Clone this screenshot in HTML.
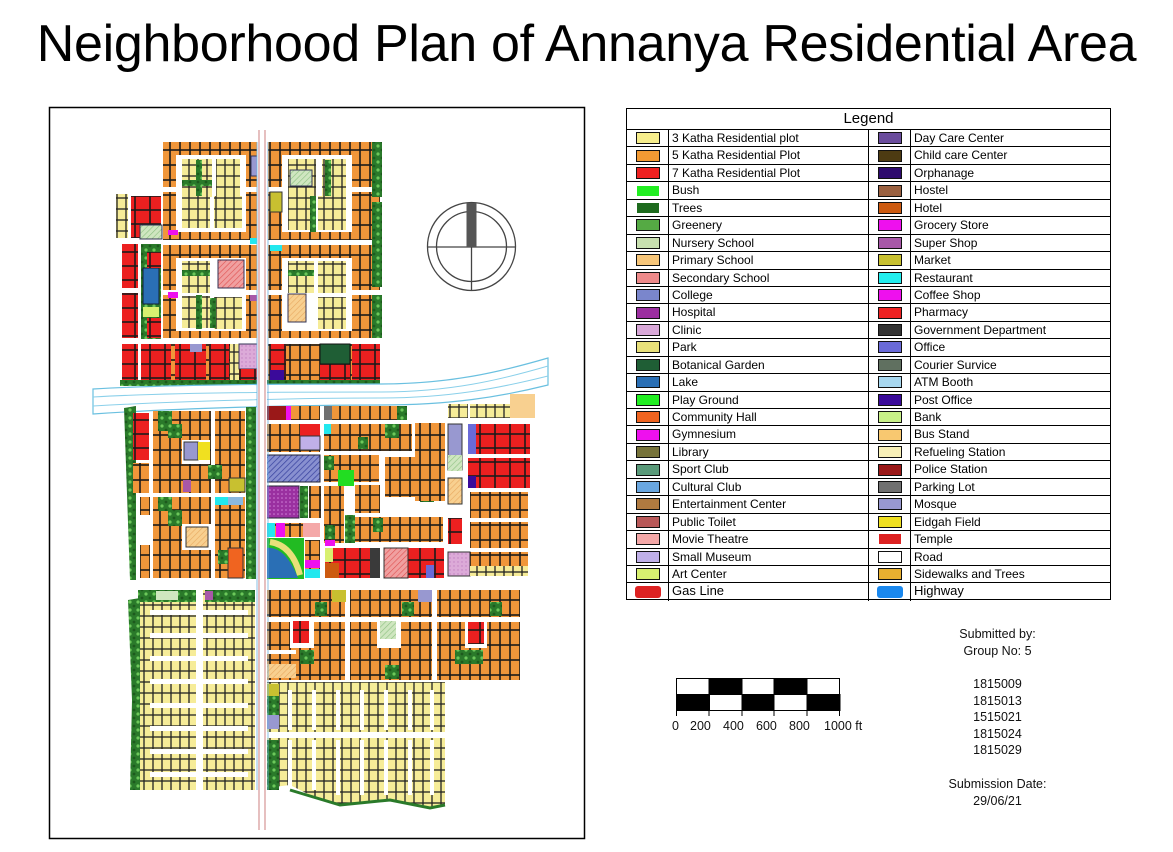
<!DOCTYPE html>
<html><head><meta charset="utf-8">
<style>
html,body{margin:0;padding:0;background:#fff;}
body{width:1173px;height:852px;position:relative;overflow:hidden;font-family:"Liberation Sans",Arial,sans-serif;}
.t{position:absolute;left:0;top:14px;width:1173px;text-align:center;font-size:52px;line-height:60px;color:#000;letter-spacing:-0.3px;}
.lg{position:absolute;left:626px;top:108px;width:485px;height:492px;border:1.5px solid #000;box-sizing:border-box;}
.lh{height:20px;border-bottom:1.5px solid #000;text-align:center;font-size:15px;line-height:20px;}
.row{height:17.45px;display:flex;border-bottom:1px solid #000;box-sizing:border-box;font-size:12px;line-height:16px;}
.row:last-child{border-bottom:none}
.sw{width:42px;box-sizing:border-box;border-right:1px solid #000;display:flex;align-items:center;justify-content:center;flex:none;}
.sw i{display:block;width:22px;height:10px;border:1.2px solid #111;}
.sw i.r{border-radius:3px;width:26px;height:12px;border:none}
.tx{width:200px;box-sizing:border-box;border-right:1px solid #000;padding-left:3px;white-space:nowrap;flex:none;}
.tx2{padding-left:3px;white-space:nowrap;}
.info{position:absolute;left:920px;width:155px;text-align:center;font-size:12.5px;line-height:16.5px;color:#111;}
</style></head><body>
<div class="t">Neighborhood Plan of Annanya Residential Area</div>

<svg width="1173" height="852" style="position:absolute;left:0;top:0">
<defs>
<pattern id="or" width="10" height="15" patternUnits="userSpaceOnUse"><rect x="0" y="0" width="10" height="15" fill="#f0963a" stroke="#1a1a1a" stroke-width="1.6"/></pattern>
<pattern id="ye" width="9" height="11" patternUnits="userSpaceOnUse"><rect x="0" y="0" width="9" height="11" fill="#f6ec98" stroke="#222" stroke-width="1.3"/></pattern>
<pattern id="re" width="15" height="14" patternUnits="userSpaceOnUse"><rect x="0" y="0" width="15" height="14" fill="#ec2020" stroke="#1a1a1a" stroke-width="1.6"/></pattern>
<pattern id="tr" width="8" height="8" patternUnits="userSpaceOnUse"><rect width="8" height="8" fill="#2a7a2a"/><circle cx="2" cy="2" r="1.6" fill="#6cc85a"/><circle cx="6" cy="6" r="1.4" fill="#1d5a1d"/></pattern>
<pattern id="hb" width="4" height="4" patternUnits="userSpaceOnUse" patternTransform="rotate(45)"><rect width="4" height="4" fill="#8890d0"/><line x1="0" y1="0" x2="0" y2="4" stroke="#3a44a0" stroke-width="1.5"/></pattern>
<pattern id="hr" width="4" height="4" patternUnits="userSpaceOnUse" patternTransform="rotate(45)"><rect width="4" height="4" fill="#f0a0a0"/><line x1="0" y1="0" x2="0" y2="4" stroke="#e05050" stroke-width="1.2"/></pattern>
<pattern id="hg" width="4" height="4" patternUnits="userSpaceOnUse" patternTransform="rotate(45)"><rect width="4" height="4" fill="#cfe6c0"/><line x1="0" y1="0" x2="0" y2="4" stroke="#8cc080" stroke-width="1.2"/></pattern>
<pattern id="hy" width="4" height="4" patternUnits="userSpaceOnUse" patternTransform="rotate(45)"><rect width="4" height="4" fill="#f8d090"/><line x1="0" y1="0" x2="0" y2="4" stroke="#e8a860" stroke-width="1.2"/></pattern>
<pattern id="hp" width="4" height="4" patternUnits="userSpaceOnUse"><rect width="4" height="4" fill="#9a30a0"/><circle cx="2" cy="2" r="0.8" fill="#d080d8"/></pattern>
<pattern id="cl" width="4" height="4" patternUnits="userSpaceOnUse"><rect width="4" height="4" fill="#dcaad8"/><circle cx="2" cy="2" r="0.7" fill="#c080c0"/></pattern>
</defs>

<rect x="49.5" y="107.5" width="535" height="731" fill="#fff" stroke="#000" stroke-width="1.5"/>

<!-- NORTH -->
<rect x="163" y="142" width="95" height="243" fill="url(#or)"/>
<rect x="268" y="142" width="112" height="243" fill="url(#or)"/>
<g fill="#fff">
<rect x="163" y="187" width="95" height="5"/><rect x="268" y="187" width="112" height="5"/>
<rect x="163" y="240" width="95" height="5"/><rect x="268" y="240" width="112" height="5"/>
<rect x="163" y="290" width="95" height="5"/><rect x="268" y="290" width="112" height="5"/>
<rect x="163" y="338" width="95" height="6"/><rect x="268" y="338" width="112" height="6"/>
<rect x="176" y="155" width="70" height="32"/><rect x="176" y="192" width="70" height="40"/>
<rect x="282" y="155" width="70" height="32"/><rect x="282" y="192" width="70" height="40"/>
<rect x="176" y="258" width="70" height="32"/><rect x="176" y="295" width="70" height="36"/>
<rect x="282" y="258" width="70" height="32"/><rect x="282" y="295" width="70" height="36"/>
</g>
<g>
<rect x="182" y="159" width="30" height="38" fill="url(#ye)"/><rect x="216" y="159" width="24" height="38" fill="url(#ye)"/>
<rect x="182" y="192" width="28" height="36" fill="url(#ye)"/><rect x="214" y="196" width="28" height="32" fill="url(#ye)"/>
<rect x="288" y="159" width="28" height="38" fill="url(#ye)"/><rect x="322" y="159" width="24" height="38" fill="url(#ye)"/>
<rect x="288" y="196" width="26" height="34" fill="url(#ye)"/><rect x="318" y="196" width="28" height="34" fill="url(#ye)"/>
<rect x="182" y="261" width="28" height="32" fill="url(#ye)"/><rect x="288" y="261" width="26" height="32" fill="url(#ye)"/>
<rect x="318" y="261" width="28" height="32" fill="url(#ye)"/>
<rect x="182" y="296" width="28" height="32" fill="url(#ye)"/><rect x="214" y="297" width="28" height="32" fill="url(#ye)"/><rect x="318" y="297" width="28" height="32" fill="url(#ye)"/>
<rect x="218" y="260" width="26" height="28" fill="url(#hr)" stroke="#335" stroke-width="1"/>
<rect x="290" y="170" width="22" height="16" fill="url(#hg)" stroke="#335"/>
<rect x="288" y="294" width="18" height="28" fill="url(#hy)" stroke="#335"/>
<rect x="251" y="156" width="12" height="20" fill="#9898d0" stroke="#335"/>
<rect x="196" y="160" width="6" height="36" fill="url(#tr)"/><rect x="310" y="196" width="6" height="36" fill="url(#tr)"/>
<rect x="196" y="295" width="6" height="34" fill="url(#tr)"/><rect x="182" y="180" width="30" height="6" fill="url(#tr)"/>
<rect x="182" y="270" width="28" height="6" fill="url(#tr)"/><rect x="288" y="270" width="26" height="6" fill="url(#tr)"/>
<rect x="325" y="160" width="6" height="36" fill="url(#tr)"/><rect x="210" y="298" width="6" height="30" fill="url(#tr)"/>
<rect x="372" y="142" width="10" height="55" fill="url(#tr)"/><rect x="372" y="202" width="10" height="85" fill="url(#tr)"/><rect x="372" y="295" width="10" height="43" fill="url(#tr)"/>
<rect x="270" y="192" width="12" height="20" fill="#c8c030" stroke="#333"/>
<rect x="270" y="245" width="12" height="6" fill="#22e8ee"/><rect x="168" y="292" width="10" height="6" fill="#ee10ee"/>
<rect x="168" y="230" width="10" height="5" fill="#ee10ee"/><rect x="250" y="238" width="12" height="6" fill="#22e8ee"/>
<rect x="250" y="295" width="10" height="6" fill="#a858a8"/>
</g>
<rect x="116" y="194" width="12" height="44" fill="url(#ye)"/>
<rect x="131" y="196" width="30" height="42" fill="url(#re)"/>
<rect x="140" y="225" width="22" height="14" fill="url(#hg)" stroke="#335"/>
<rect x="122" y="244" width="16" height="44" fill="url(#re)"/>
<rect x="122" y="293" width="16" height="45" fill="url(#re)"/>
<rect x="141" y="244" width="20" height="95" fill="url(#tr)"/>
<rect x="143" y="268" width="16" height="36" fill="#2a6fb5" stroke="#123"/>
<rect x="143" y="307" width="16" height="10" fill="#d8f070"/>
<rect x="147" y="318" width="14" height="20" fill="url(#re)"/>
<rect x="147" y="252" width="14" height="16" fill="url(#re)"/>
<rect x="122" y="344" width="16" height="38" fill="url(#re)"/>
<rect x="141" y="344" width="30" height="38" fill="url(#re)"/>
<rect x="175" y="344" width="31" height="38" fill="url(#re)"/>
<rect x="209" y="344" width="20" height="38" fill="url(#re)"/>
<rect x="230" y="344" width="10" height="38" fill="url(#ye)"/>
<rect x="239" y="344" width="22" height="25" fill="url(#cl)" stroke="#335"/>
<rect x="239" y="369" width="21" height="14" fill="url(#re)"/>
<rect x="190" y="344" width="12" height="8" fill="#9898d0"/>
<rect x="270" y="344" width="16" height="38" fill="url(#re)"/>
<rect x="270" y="370" width="14" height="12" fill="#3a0a9a"/>
<rect x="290" y="344" width="28" height="38" fill="url(#or)"/>
<rect x="320" y="344" width="30" height="38" fill="url(#re)"/><rect x="320" y="344" width="30" height="20" fill="#1f5e35" stroke="#111"/>
<rect x="352" y="344" width="28" height="38" fill="url(#re)"/>
<rect x="120" y="380" width="260" height="6" fill="url(#tr)"/>

<!-- HIGHWAY -->
<path d="M93,389 C180,384 300,384 380,384 C450,384 500,372 548,358 L548,385 C500,397 450,405 380,405 C300,405 180,408 93,414 Z" fill="#fff" stroke="#6ac0e0" stroke-width="1.2"/>
<path d="M93,397 C180,392 300,392 380,392 C450,392 500,380 548,366" fill="none" stroke="#8ad0ea" stroke-width="1"/>
<path d="M93,406 C180,401 300,398 380,398 C450,398 500,388 548,376" fill="none" stroke="#8ad0ea" stroke-width="1"/>

<!-- MIDDLE -->
<path d="M124,408 L136,406 L136,580 L130,580 Z" fill="url(#tr)"/>
<rect x="133" y="413" width="16" height="47" fill="url(#re)"/>
<rect x="133" y="463" width="16" height="30" fill="url(#or)"/>
<rect x="140" y="497" width="10" height="18" fill="url(#or)"/><rect x="140" y="545" width="10" height="33" fill="url(#or)"/>
<rect x="153" y="411" width="58" height="82" fill="url(#or)"/>
<rect x="158" y="411" width="14" height="20" fill="url(#tr)"/><rect x="168" y="424" width="14" height="14" fill="url(#tr)"/>
<rect x="182" y="440" width="28" height="24" fill="#fff"/><rect x="184" y="442" width="14" height="18" fill="#9898d0" stroke="#333"/><rect x="198" y="442" width="12" height="18" fill="#f0e020"/>
<rect x="183" y="480" width="8" height="12" fill="#a858a8"/>
<rect x="215" y="411" width="30" height="82" fill="url(#or)"/>
<rect x="208" y="465" width="14" height="14" fill="url(#tr)"/><rect x="229" y="478" width="16" height="14" fill="#c8c030" stroke="#333"/>
<rect x="246" y="407" width="10" height="172" fill="url(#tr)"/>
<rect x="153" y="497" width="58" height="81" fill="url(#or)"/>
<rect x="158" y="497" width="14" height="14" fill="url(#tr)"/><rect x="168" y="510" width="14" height="16" fill="url(#tr)"/>
<rect x="182" y="524" width="30" height="26" fill="#fff"/><rect x="186" y="527" width="22" height="20" fill="url(#hy)" stroke="#333"/>
<rect x="215" y="497" width="30" height="81" fill="url(#or)"/>
<rect x="215" y="497" width="28" height="8" fill="#22e8ee"/><rect x="228" y="497" width="15" height="8" fill="#8ab8e0"/>
<rect x="228" y="548" width="15" height="30" fill="#f06420" stroke="#333"/><rect x="218" y="550" width="10" height="14" fill="url(#tr)"/>
<rect x="266" y="406" width="54" height="14" fill="url(#or)"/><rect x="266" y="406" width="20" height="14" fill="#9a1818"/><rect x="286" y="406" width="5" height="14" fill="#ee10ee"/>
<rect x="266" y="424" width="54" height="28" fill="url(#or)"/><rect x="300" y="424" width="20" height="12" fill="#ec2020"/><rect x="300" y="436" width="20" height="14" fill="#c0b0e8" stroke="#333"/>
<rect x="266" y="455" width="54" height="27" fill="url(#hb)" stroke="#223"/>
<rect x="266" y="486" width="33" height="32" fill="url(#hp)" stroke="#223"/>
<rect x="300" y="486" width="8" height="32" fill="url(#tr)"/><rect x="309" y="486" width="12" height="32" fill="url(#or)"/>
<rect x="266" y="523" width="54" height="14" fill="url(#or)"/><rect x="266" y="523" width="9" height="14" fill="#22e8ee"/><rect x="276" y="523" width="9" height="14" fill="#ee10ee"/><rect x="303" y="523" width="17" height="14" fill="#f4a8a8"/>
<rect x="264" y="538" width="40" height="41" fill="#22bb22"/><path d="M265,548 Q285,545 298,578 L265,578 Z" fill="#2a6fb5"/><path d="M270,542 Q292,545 300,575" stroke="#e8e07a" stroke-width="6" fill="none"/>
<rect x="305" y="540" width="15" height="38" fill="url(#or)"/><rect x="305" y="560" width="15" height="8" fill="#ee10ee"/><rect x="305" y="569" width="15" height="9" fill="#22e8ee"/>
<rect x="324" y="406" width="80" height="14" fill="url(#or)"/><rect x="324" y="406" width="8" height="14" fill="#707070"/><rect x="397" y="406" width="10" height="14" fill="url(#tr)"/>
<rect x="324" y="424" width="88" height="27" fill="url(#or)"/><rect x="324" y="424" width="7" height="10" fill="#22e8ee"/><rect x="385" y="424" width="14" height="14" fill="url(#tr)"/>
<rect x="324" y="455" width="55" height="27" fill="url(#or)"/><rect x="324" y="456" width="10" height="14" fill="url(#tr)"/><rect x="338" y="470" width="16" height="16" fill="#22dd22"/>
<rect x="324" y="486" width="20" height="57" fill="url(#or)"/><rect x="345" y="486" width="12" height="57" fill="#fff"/>
<rect x="355" y="485" width="25" height="28" fill="url(#or)"/>
<rect x="385" y="455" width="30" height="40" fill="#fff"/>
<rect x="385" y="457" width="50" height="40" fill="url(#or)"/><rect x="420" y="488" width="14" height="14" fill="url(#tr)"/>
<rect x="415" y="423" width="30" height="78" fill="url(#or)"/>
<rect x="355" y="517" width="88" height="25" fill="url(#or)"/><rect x="345" y="515" width="10" height="28" fill="url(#tr)"/><rect x="373" y="518" width="10" height="14" fill="url(#tr)"/>
<rect x="325" y="525" width="10" height="14" fill="url(#tr)"/><rect x="325" y="540" width="10" height="6" fill="#ee10ee"/>
<rect x="325" y="548" width="45" height="30" fill="url(#re)"/><rect x="325" y="548" width="8" height="14" fill="#d8f070"/><rect x="325" y="563" width="14" height="15" fill="#cc5a10"/><rect x="370" y="548" width="10" height="30" fill="#3a3a3a"/>
<rect x="384" y="548" width="60" height="30" fill="url(#re)"/><rect x="384" y="548" width="24" height="30" fill="url(#hr)" stroke="#333"/><rect x="426" y="565" width="8" height="13" fill="#6a6ad8"/>
<rect x="448" y="404" width="20" height="14" fill="url(#ye)"/><rect x="470" y="404" width="40" height="14" fill="url(#ye)"/><rect x="510" y="394" width="25" height="24" fill="#f8d090"/>
<rect x="448" y="424" width="14" height="46" fill="#9898d0" stroke="#333"/><rect x="448" y="455" width="14" height="16" fill="url(#hg)"/>
<rect x="448" y="478" width="14" height="26" fill="url(#hy)" stroke="#333"/>
<rect x="448" y="518" width="14" height="26" fill="url(#re)"/>
<rect x="468" y="424" width="62" height="30" fill="url(#re)"/><rect x="468" y="424" width="8" height="30" fill="#6a6ad8"/>
<rect x="468" y="458" width="62" height="30" fill="url(#re)"/><rect x="468" y="476" width="8" height="12" fill="#3a0a9a"/>
<rect x="470" y="492" width="58" height="26" fill="url(#or)"/>
<rect x="470" y="522" width="58" height="26" fill="url(#or)"/>
<rect x="448" y="552" width="22" height="24" fill="url(#cl)" stroke="#333"/><rect x="470" y="552" width="58" height="24" fill="url(#or)"/><rect x="470" y="566" width="58" height="10" fill="url(#ye)"/>
<rect x="358" y="437" width="10" height="12" fill="url(#tr)"/>

<!-- SOUTH -->
<rect x="138" y="590" width="117" height="200" fill="url(#ye)"/>
<g fill="#fff">
<rect x="196" y="590" width="7" height="200"/>
<rect x="150" y="610" width="46" height="5"/><rect x="203" y="610" width="45" height="5"/>
<rect x="150" y="633" width="46" height="5"/><rect x="203" y="633" width="45" height="5"/>
<rect x="150" y="656" width="46" height="5"/><rect x="203" y="656" width="45" height="5"/>
<rect x="150" y="679" width="46" height="5"/><rect x="203" y="679" width="45" height="5"/>
<rect x="150" y="703" width="46" height="5"/><rect x="203" y="703" width="45" height="5"/>
<rect x="150" y="726" width="46" height="5"/><rect x="203" y="726" width="45" height="5"/>
<rect x="150" y="749" width="46" height="5"/><rect x="203" y="749" width="45" height="5"/>
<rect x="150" y="772" width="46" height="5"/><rect x="203" y="772" width="45" height="5"/>
</g>
<rect x="138" y="590" width="58" height="12" fill="url(#tr)"/><rect x="205" y="590" width="50" height="12" fill="url(#tr)"/>
<rect x="156" y="591" width="22" height="9" fill="#cfe6c0"/><rect x="205" y="591" width="8" height="9" fill="#a858a8"/>
<path d="M128,600 L140,598 L140,790 L130,790 L132,700 Z" fill="url(#tr)"/>
<rect x="266" y="590" width="254" height="90" fill="url(#or)"/>
<g fill="#fff">
<rect x="266" y="617" width="254" height="5"/><rect x="345" y="590" width="5" height="90"/><rect x="432" y="590" width="5" height="90"/>
<rect x="290" y="622" width="24" height="26"/><rect x="377" y="622" width="24" height="26"/><rect x="465" y="622" width="22" height="26"/>
<rect x="266" y="650" width="30" height="4"/>
</g>
<rect x="293" y="621" width="16" height="22" fill="url(#re)"/><rect x="380" y="621" width="16" height="18" fill="url(#hg)"/><rect x="468" y="622" width="16" height="22" fill="url(#re)"/>
<rect x="332" y="590" width="14" height="12" fill="#c8c030"/><rect x="418" y="590" width="14" height="12" fill="#9898d0"/>
<rect x="315" y="602" width="12" height="14" fill="url(#tr)"/><rect x="402" y="602" width="12" height="14" fill="url(#tr)"/><rect x="490" y="602" width="12" height="14" fill="url(#tr)"/>
<rect x="300" y="650" width="14" height="14" fill="url(#tr)"/><rect x="385" y="665" width="14" height="14" fill="url(#tr)"/><rect x="455" y="650" width="28" height="14" fill="url(#tr)"/>
<rect x="266" y="664" width="30" height="14" fill="url(#hy)"/>
<path d="M266,682 L445,682 L445,805 L430,808 L390,800 L340,805 L310,795 L290,785 L266,788 Z" fill="url(#ye)"/>
<g fill="#fff">
<rect x="266" y="732" width="180" height="6"/>
<rect x="288" y="690" width="4" height="40"/><rect x="312" y="690" width="4" height="40"/><rect x="336" y="690" width="4" height="40"/><rect x="360" y="690" width="4" height="40"/><rect x="384" y="690" width="4" height="40"/><rect x="408" y="690" width="4" height="40"/><rect x="430" y="690" width="4" height="40"/>
<rect x="288" y="740" width="4" height="50"/><rect x="312" y="740" width="4" height="50"/><rect x="336" y="740" width="4" height="55"/><rect x="360" y="740" width="4" height="55"/><rect x="384" y="740" width="4" height="55"/><rect x="408" y="740" width="4" height="55"/><rect x="430" y="740" width="4" height="55"/>
</g>
<rect x="266" y="684" width="13" height="45" fill="url(#tr)"/><rect x="266" y="684" width="13" height="12" fill="#c8c030"/><rect x="266" y="715" width="13" height="14" fill="#9898d0"/>
<rect x="266" y="740" width="13" height="50" fill="url(#tr)"/>
<path d="M290,790 L340,805 L390,800 L430,808 L445,805" stroke="#2a7a2a" stroke-width="3" fill="none"/>
<rect x="257" y="130" width="10" height="700" fill="#fff"/>
<line x1="259" y1="130" x2="259" y2="830" stroke="#c06060" stroke-width="0.8"/>
<line x1="265" y1="130" x2="265" y2="830" stroke="#c06060" stroke-width="0.8"/>
<line x1="257" y1="142" x2="257" y2="790" stroke="#6ab0e0" stroke-width="0.8"/>
<line x1="268" y1="142" x2="268" y2="790" stroke="#6ab0e0" stroke-width="0.8"/>

<!-- compass -->
<g stroke="#444" stroke-width="1.3" fill="none">
<circle cx="471.5" cy="246.5" r="44"/><circle cx="471.5" cy="246.5" r="35"/>
<line x1="427" y1="247" x2="516" y2="247"/><line x1="471.5" y1="247" x2="471.5" y2="290"/>
</g>
<rect x="466.5" y="203" width="10" height="44" fill="#555"/>

<!-- scale bar -->
<g stroke="#000" stroke-width="1">
<rect x="676.5" y="678.5" width="163" height="32" fill="#fff"/>
<rect x="709" y="678.5" width="33" height="16" fill="#000"/><rect x="774" y="678.5" width="33" height="16" fill="#000"/>
<rect x="676.5" y="694.5" width="33" height="16" fill="#000"/><rect x="742" y="694.5" width="32" height="16" fill="#000"/><rect x="807" y="694.5" width="33" height="16" fill="#000"/>
<line x1="676.5" y1="710" x2="676.5" y2="716"/><line x1="709" y1="710" x2="709" y2="716"/><line x1="742" y1="710" x2="742" y2="716"/><line x1="774" y1="710" x2="774" y2="716"/><line x1="807" y1="710" x2="807" y2="716"/><line x1="839.5" y1="710" x2="839.5" y2="716"/>
</g>
<g font-family="Liberation Sans, Arial, sans-serif" font-size="12.5" fill="#111">
<text x="672" y="730">0</text><text x="690" y="730">200</text><text x="723" y="730">400</text><text x="756" y="730">600</text><text x="789" y="730">800</text><text x="824" y="730">1000 ft</text>
</g>
</svg>

<div class="lg">
<div class="lh">Legend</div>
<div class="row"><div class="sw"><i style="background:#f7ee8c"></i></div><div class="tx">3 Katha Residential plot</div><div class="sw"><i style="background:#6a4c9c"></i></div><div class="tx2">Day Care Center</div></div>
<div class="row"><div class="sw"><i style="background:#f39a33"></i></div><div class="tx">5 Katha Residential Plot</div><div class="sw"><i style="background:#4d3b12"></i></div><div class="tx2">Child care Center</div></div>
<div class="row"><div class="sw"><i style="background:#ee2020"></i></div><div class="tx">7 Katha Residential Plot</div><div class="sw"><i style="background:#2e0a6e"></i></div><div class="tx2">Orphanage</div></div>
<div class="row"><div class="sw"><i style="background:#22ee22;border:none"></i></div><div class="tx">Bush</div><div class="sw"><i style="background:#9a6040"></i></div><div class="tx2">Hostel</div></div>
<div class="row"><div class="sw"><i style="background:#1e6b1e;border:none"></i></div><div class="tx">Trees</div><div class="sw"><i style="background:#cc5a10"></i></div><div class="tx2">Hotel</div></div>
<div class="row"><div class="sw"><i style="background:#55aa44"></i></div><div class="tx">Greenery</div><div class="sw"><i style="background:#ee10ee"></i></div><div class="tx2">Grocery Store</div></div>
<div class="row"><div class="sw"><i style="background:#c8e0b0"></i></div><div class="tx">Nursery School</div><div class="sw"><i style="background:#a858a8"></i></div><div class="tx2">Super Shop</div></div>
<div class="row"><div class="sw"><i style="background:#f7c67a"></i></div><div class="tx">Primary School</div><div class="sw"><i style="background:#c8c030"></i></div><div class="tx2">Market</div></div>
<div class="row"><div class="sw"><i style="background:#ee8a8a"></i></div><div class="tx">Secondary School</div><div class="sw"><i style="background:#22eeee"></i></div><div class="tx2">Restaurant</div></div>
<div class="row"><div class="sw"><i style="background:#7a86cc"></i></div><div class="tx">College</div><div class="sw"><i style="background:#ee10ee"></i></div><div class="tx2">Coffee Shop</div></div>
<div class="row"><div class="sw"><i style="background:#9c2ea0"></i></div><div class="tx">Hospital</div><div class="sw"><i style="background:#ee2222"></i></div><div class="tx2">Pharmacy</div></div>
<div class="row"><div class="sw"><i style="background:#d8a8d8"></i></div><div class="tx">Clinic</div><div class="sw"><i style="background:#333"></i></div><div class="tx2">Government Department</div></div>
<div class="row"><div class="sw"><i style="background:#e8e07a"></i></div><div class="tx">Park</div><div class="sw"><i style="background:#6a6ad8"></i></div><div class="tx2">Office</div></div>
<div class="row"><div class="sw"><i style="background:#1f5e35"></i></div><div class="tx">Botanical Garden</div><div class="sw"><i style="background:#607060"></i></div><div class="tx2">Courier Survice</div></div>
<div class="row"><div class="sw"><i style="background:#2a6fb5"></i></div><div class="tx">Lake</div><div class="sw"><i style="background:#a8d8f0"></i></div><div class="tx2">ATM Booth</div></div>
<div class="row"><div class="sw"><i style="background:#22ee22"></i></div><div class="tx">Play Ground</div><div class="sw"><i style="background:#3a0a9a"></i></div><div class="tx2">Post Office</div></div>
<div class="row"><div class="sw"><i style="background:#f06420"></i></div><div class="tx">Community Hall</div><div class="sw"><i style="background:#c8f088"></i></div><div class="tx2">Bank</div></div>
<div class="row"><div class="sw"><i style="background:#ee10ee"></i></div><div class="tx">Gymnesium</div><div class="sw"><i style="background:#f8c870"></i></div><div class="tx2">Bus Stand</div></div>
<div class="row"><div class="sw"><i style="background:#77733a"></i></div><div class="tx">Library</div><div class="sw"><i style="background:#f8f0b8"></i></div><div class="tx2">Refueling Station</div></div>
<div class="row"><div class="sw"><i style="background:#5a9a7a"></i></div><div class="tx">Sport Club</div><div class="sw"><i style="background:#9a1818"></i></div><div class="tx2">Police Station</div></div>
<div class="row"><div class="sw"><i style="background:#6aa7e0"></i></div><div class="tx">Cultural Club</div><div class="sw"><i style="background:#707070"></i></div><div class="tx2">Parking Lot</div></div>
<div class="row"><div class="sw"><i style="background:#b07a40"></i></div><div class="tx">Entertainment Center</div><div class="sw"><i style="background:#9898d0"></i></div><div class="tx2">Mosque</div></div>
<div class="row"><div class="sw"><i style="background:#b85858"></i></div><div class="tx">Public Toilet</div><div class="sw"><i style="background:#f0e020"></i></div><div class="tx2">Eidgah Field</div></div>
<div class="row"><div class="sw"><i style="background:#f4a8a8"></i></div><div class="tx">Movie Theatre</div><div class="sw"><i style="background:#dd2222;border:none"></i></div><div class="tx2">Temple</div></div>
<div class="row"><div class="sw"><i style="background:#c0b0e8"></i></div><div class="tx">Small Museum</div><div class="sw"><i style="background:#fff"></i></div><div class="tx2">Road</div></div>
<div class="row"><div class="sw"><i style="background:#d8f070"></i></div><div class="tx">Art Center</div><div class="sw"><i style="background:#e8b030"></i></div><div class="tx2">Sidewalks and Trees</div></div>
<div class="row" style="font-size:13px"><div class="sw"><i class="r" style="background:#dd2222"></i></div><div class="tx">Gas Line</div><div class="sw"><i class="r" style="background:#1a88ee"></i></div><div class="tx2">Highway</div></div>
</div>

<div class="info" style="top:626px">Submitted by:<br>Group No: 5</div>
<div class="info" style="top:676px">1815009<br>1815013<br>1515021<br>1815024<br>1815029</div>
<div class="info" style="top:776px">Submission Date:<br>29/06/21</div>
</body></html>
